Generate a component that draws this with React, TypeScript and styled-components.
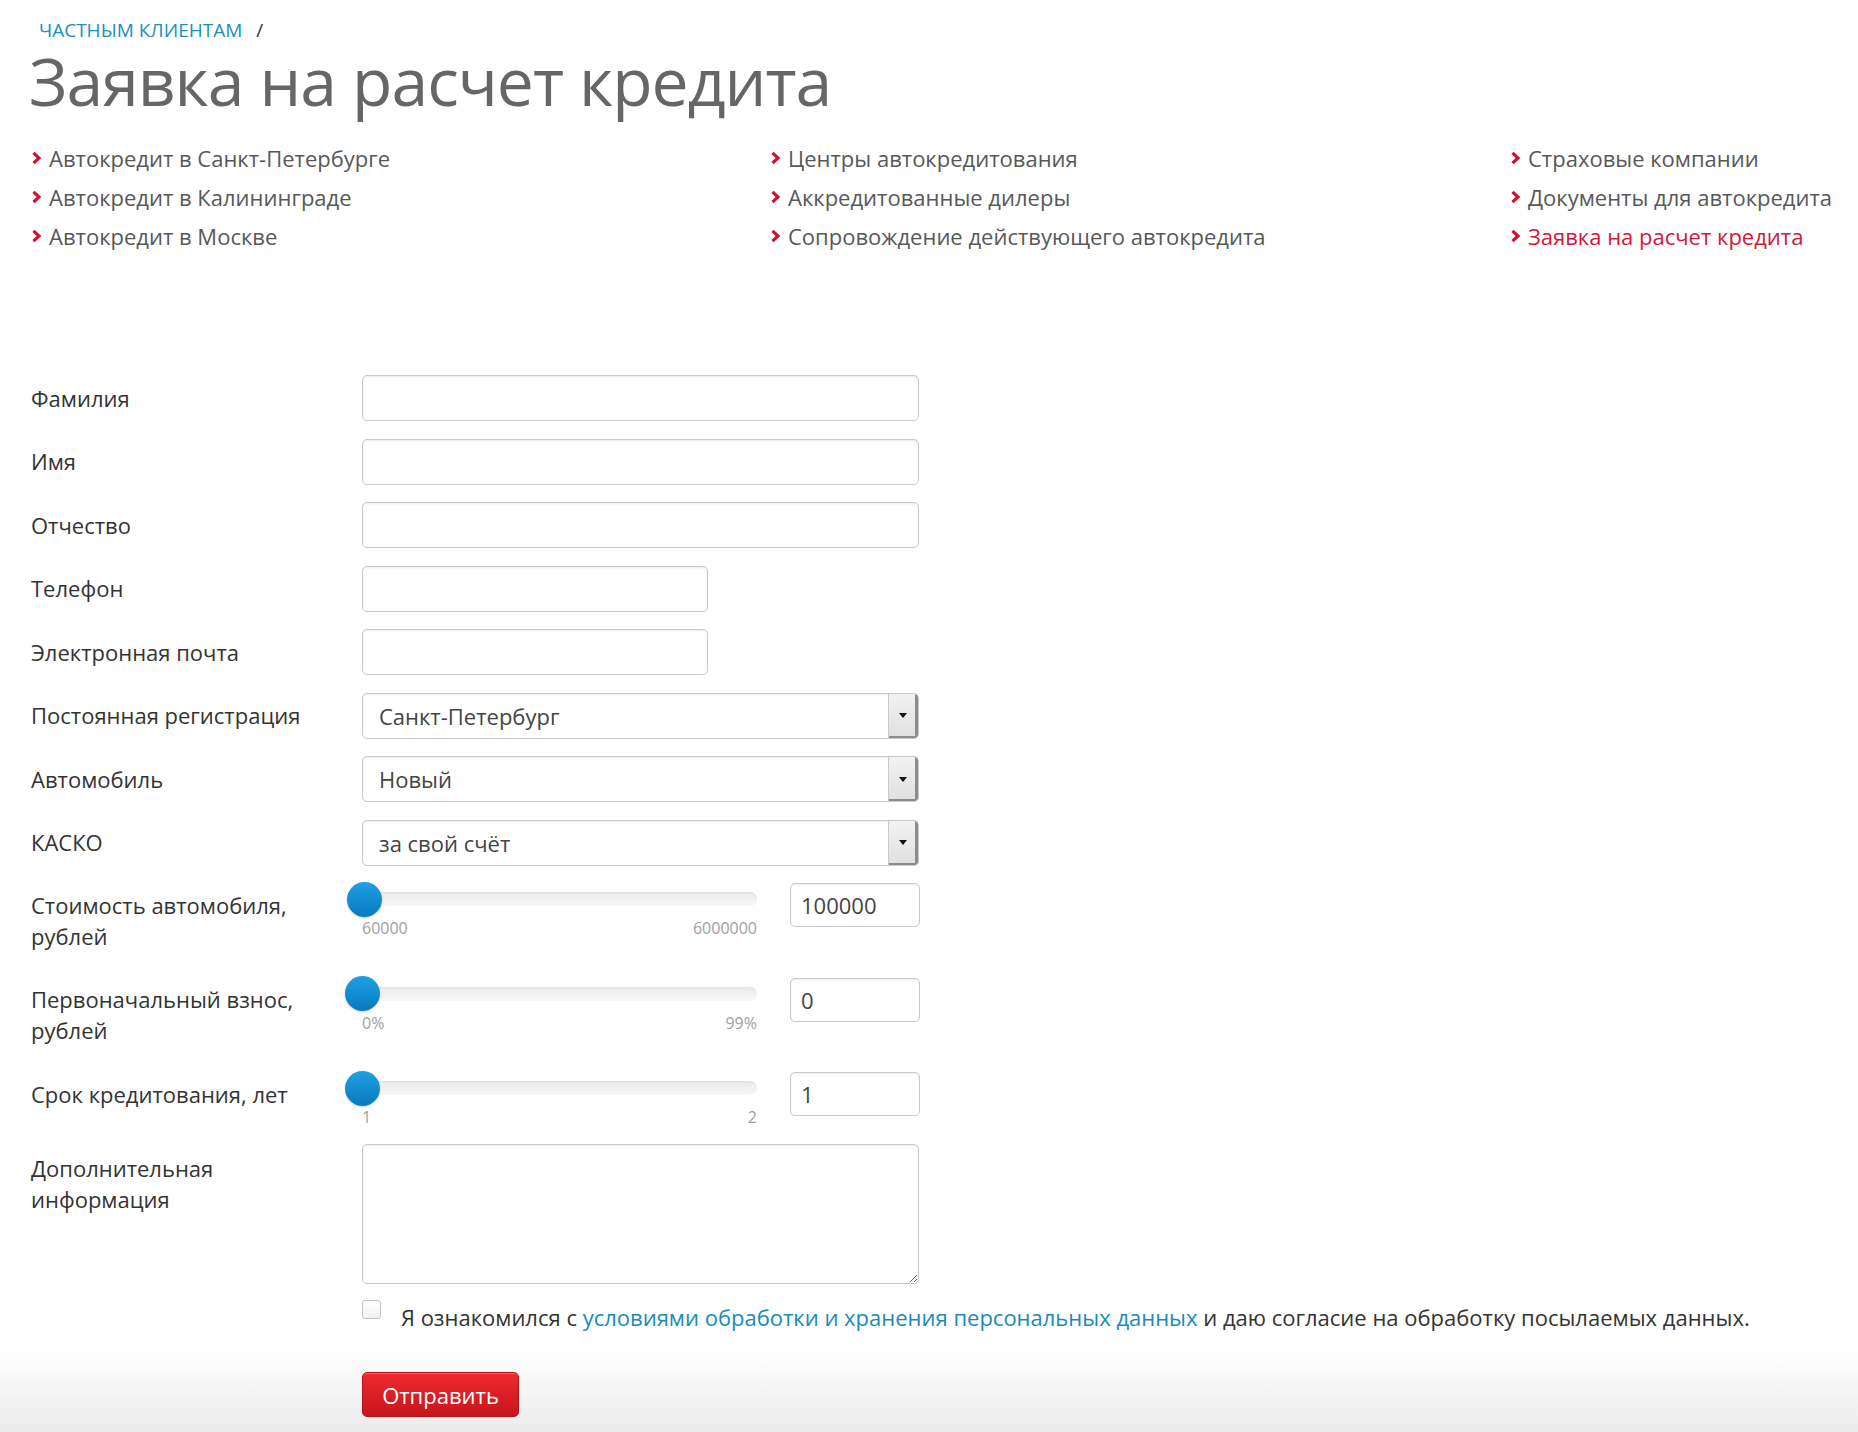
import styled, { createGlobalStyle } from "styled-components";

const GlobalStyle = createGlobalStyle`
  html, body {
    margin: 0;
    padding: 0;
  }
  body {
    font-family: "Open Sans", "Liberation Sans", sans-serif;
    background: #fff;
  }
`;

const Page = styled.div`
  min-height: 100vh;
  box-sizing: border-box;
  padding: 18px 0 15px 31px;
  background: linear-gradient(to bottom, #fff 0, #fff calc(100% - 85px), #ebebeb 100%);
`;

const Breadcrumb = styled.div`
  display: flex;
  gap: 14px;
  padding-left: 8px;
  font-size: 19px;
  line-height: 24px;
  text-transform: uppercase;
  color: #1a8fc0;
`;

const Slash = styled.span`
  color: #333;
`;

const Title = styled.h1`
  margin: 0 0 0 -2px;
  font-size: 66px;
  line-height: 76px;
  font-weight: 400;
  letter-spacing: -1px;
  color: #666;
`;

const LinkGrid = styled.div`
  margin-top: 20px;
  display: grid;
  grid-template-columns: 739px 740px auto;
`;

const LinkList = styled.ul`
  list-style: none;
  margin: 0;
  padding: 0;
`;

const LinkItem = styled.li<{ $active?: boolean }>`
  display: flex;
  align-items: center;
  gap: 7px;
  height: 39px;
  font-size: 22px;
  color: ${(p) => (p.$active ? "#d3173a" : "#585858")};
  white-space: nowrap;
`;

const Form = styled.form`
  margin-top: 120px;
`;

const FieldRow = styled.div<{ $top?: boolean; $mb: number }>`
  display: flex;
  align-items: ${(p) => (p.$top ? "flex-start" : "center")};
  margin-bottom: ${(p) => p.$mb}px;
`;

const Label = styled.label<{ $pt?: number }>`
  flex: none;
  width: 331px;
  box-sizing: border-box;
  padding: ${(p) => p.$pt ?? 0}px 41px 0 0;
  font-size: 22px;
  line-height: 31px;
  color: #333;
`;

const fieldBase = `
  box-sizing: border-box;
  border: 1px solid #c9c9c9;
  border-radius: 5px;
  background: #fff;
  box-shadow: inset 0 1px 2px rgba(0, 0, 0, 0.08);
  font-family: "Open Sans", "Liberation Sans", sans-serif;
  font-size: 22px;
  color: #444;
  outline: none;
`;

const TextInput = styled.input<{ $w: number }>`
  ${fieldBase}
  width: ${(p) => p.$w}px;
  height: 46px;
  padding: 0 12px;
`;

const SelectBox = styled.div`
  ${fieldBase}
  width: 557px;
  height: 46px;
  display: flex;
  align-items: center;
  padding-left: 16px;
  overflow: hidden;
`;

const SelectArrow = styled.span`
  margin-left: auto;
  align-self: stretch;
  width: 29px;
  display: flex;
  align-items: center;
  justify-content: center;
  background: linear-gradient(#f2f2f2, #e0e0e0);
  border-left: 1px solid #c9c9c9;
  box-shadow: inset -3px -2px 0 #8c8c8c;
  &::after {
    content: "";
    border-left: 4px solid transparent;
    border-right: 4px solid transparent;
    border-top: 5px solid #111;
    margin-right: 2px;
  }
`;

const SliderBox = styled.div`
  position: relative;
  flex: none;
  width: 395px;
  padding-top: 9px;
`;

const Track = styled.div`
  height: 14px;
  border-radius: 7px;
  background: linear-gradient(#eaeaea, #f8f8f8);
  box-shadow: inset 0 1px 2px rgba(0, 0, 0, 0.05);
`;

const Knob = styled.div`
  position: absolute;
  top: -1.5px;
  width: 35px;
  height: 35px;
  margin-left: -17.5px;
  border-radius: 50%;
  background: linear-gradient(#1ea0e4, #0a79c1);
  box-shadow: 0 1px 2px rgba(0, 0, 0, 0.2);
`;

const Ticks = styled.div`
  display: flex;
  justify-content: space-between;
  margin-top: 13px;
  font-size: 16px;
  line-height: 18px;
  color: #a0a0a0;
`;

const NumberInput = styled.input`
  ${fieldBase}
  margin-left: 33px;
  width: 130px;
  height: 44px;
  padding: 0 10px;
`;

const TextArea = styled.textarea`
  ${fieldBase}
  width: 557px;
  height: 140px;
  padding: 10px 12px;
  resize: both;
`;

const ConsentRow = styled.div`
  display: flex;
  align-items: flex-start;
  gap: 20px;
  margin: 0 0 39px 331px;
`;

const CheckBox = styled.input`
  appearance: none;
  flex: none;
  margin: 0;
  width: 19px;
  height: 19px;
  border: 1px solid #c4c4c4;
  border-radius: 3px;
  background: linear-gradient(#fff, #f1f1f1);
`;

const ConsentText = styled.span`
  margin-top: 2px;
  font-size: 22px;
  line-height: 31px;
  color: #333;
  white-space: nowrap;
  a {
    color: #1a8bb8;
    text-decoration: none;
  }
`;

const SubmitButton = styled.button`
  margin-left: 331px;
  width: 157px;
  height: 45px;
  border: 1px solid #b3121a;
  border-radius: 5px;
  background: linear-gradient(#ee2a30, #c8151c);
  box-shadow: inset 0 1px 0 rgba(255, 255, 255, 0.25);
  font-family: "Open Sans", "Liberation Sans", sans-serif;
  font-size: 22px;
  color: #fff;
  padding: 0;
`;

const Chevron = () => (
  <svg width="11" height="14" viewBox="0 0 11 14">
    <path d="M2.5 1.8 L8 7 L2.5 12.2" fill="none" stroke="#d3102f" strokeWidth="3.2" />
  </svg>
);

const linkColumns = [
  [
    { text: "Автокредит в Санкт-Петербурге" },
    { text: "Автокредит в Калининграде" },
    { text: "Автокредит в Москве" },
  ],
  [
    { text: "Центры автокредитования" },
    { text: "Аккредитованные дилеры" },
    { text: "Сопровождение действующего автокредита" },
  ],
  [
    { text: "Страховые компании" },
    { text: "Документы для автокредита" },
    { text: "Заявка на расчет кредита", active: true },
  ],
];

const textFields = [
  { label: "Фамилия", w: 557 },
  { label: "Имя", w: 557 },
  { label: "Отчество", w: 557 },
  { label: "Телефон", w: 346 },
  { label: "Электронная почта", w: 346 },
];

const selects = [
  { label: "Постоянная регистрация", value: "Санкт-Петербург" },
  { label: "Автомобиль", value: "Новый" },
  { label: "КАСКО", value: "за свой счёт" },
];

const sliders = [
  { label: "Стоимость автомобиля, рублей", min: 60000, max: 6000000, value: 100000, minText: "60000", maxText: "6000000", mb: 26 },
  { label: "Первоначальный взнос, рублей", min: 0, max: 99, value: 0, minText: "0%", maxText: "99%", mb: 26 },
  { label: "Срок кредитования, лет", min: 1, max: 2, value: 1, minText: "1", maxText: "2", mb: 18 },
];

function App() {
  return (
    <Page>
      <GlobalStyle />
      <Breadcrumb>
        <span>Частным клиентам</span>
        <Slash>/</Slash>
      </Breadcrumb>
      <Title>Заявка на расчет кредита</Title>

      <LinkGrid>
        {linkColumns.map((col, i) => (
          <LinkList key={i}>
            {col.map((l) => (
              <LinkItem key={l.text} $active={"active" in l && l.active}>
                <Chevron />
                {l.text}
              </LinkItem>
            ))}
          </LinkList>
        ))}
      </LinkGrid>

      <Form onSubmit={(e) => e.preventDefault()}>
        {textFields.map((f) => (
          <FieldRow key={f.label} $mb={17.5}>
            <Label>{f.label}</Label>
            <TextInput $w={f.w} />
          </FieldRow>
        ))}

        {selects.map((s) => (
          <FieldRow key={s.label} $mb={17.5}>
            <Label>{s.label}</Label>
            <SelectBox>
              {s.value}
              <SelectArrow />
            </SelectBox>
          </FieldRow>
        ))}

        {sliders.map((s) => (
          <FieldRow key={s.label} $top $mb={s.mb}>
            <Label $pt={6.5}>{s.label}</Label>
            <SliderBox>
              <Track />
              <Knob style={{ left: `${((s.value - s.min) / (s.max - s.min)) * 100}%` }} />
              <Ticks>
                <span>{s.minText}</span>
                <span>{s.maxText}</span>
              </Ticks>
            </SliderBox>
            <NumberInput defaultValue={String(s.value)} />
          </FieldRow>
        ))}

        <FieldRow $top $mb={16}>
          <Label $pt={8.5}>Дополнительная информация</Label>
          <TextArea />
        </FieldRow>

        <ConsentRow>
          <CheckBox type="checkbox" />
          <ConsentText>
            Я ознакомился с <a href="#">условиями обработки и хранения персональных данных</a> и даю
            согласие на обработку посылаемых данных.
          </ConsentText>
        </ConsentRow>

        <SubmitButton type="submit">Отправить</SubmitButton>
      </Form>
    </Page>
  );
}

export default App;
